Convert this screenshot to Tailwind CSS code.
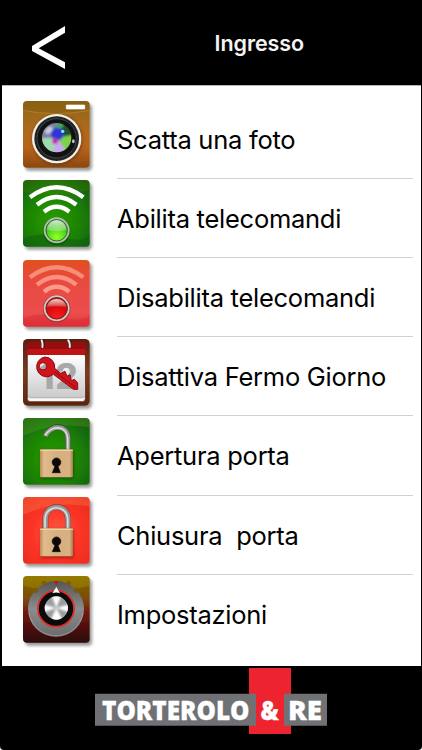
<!DOCTYPE html>
<html lang="it">
<head>
  <meta charset="UTF-8" />
  <meta name="viewport" content="width=device-width, initial-scale=1.0" />
  <title>Ingresso</title>
  <script src="https://cdn.jsdelivr.net/npm/@tailwindcss/browser@4"></script>
</head>
<body class="bg-white font-['Inter',sans-serif] text-black">
  <!-- Shared gradients -->
  <svg class="absolute w-0 h-0" aria-hidden="true">
    <defs>
      <filter id="shadow" x="-10%" y="-10%" width="130%" height="130%">
        <feDropShadow dx="7" dy="9" stdDeviation="4" flood-color="#000" flood-opacity=".4" />
      </filter>
      <filter id="soft" x="-20%" y="-20%" width="140%" height="140%"><feGaussianBlur stdDeviation="5" /></filter>
      <filter id="softer" x="-20%" y="-20%" width="140%" height="140%"><feGaussianBlur stdDeviation="3" /></filter>
      <linearGradient id="orange" x1="0" y1="0" x2="0" y2="1">
        <stop offset="0" stop-color="#8f6412" /><stop offset=".35" stop-color="#a8691f" /><stop offset=".7" stop-color="#b7641c" /><stop offset="1" stop-color="#8c480f" />
      </linearGradient>
      <radialGradient id="green" cx=".45" cy=".6" r=".75">
        <stop offset="0" stop-color="#279c04" /><stop offset=".5" stop-color="#1d8406" /><stop offset="1" stop-color="#145a0a" />
      </radialGradient>
      <linearGradient id="coral" x1="0" y1="0" x2="0" y2="1">
        <stop offset="0" stop-color="#e0501f" /><stop offset=".3" stop-color="#ea4a3e" /><stop offset=".8" stop-color="#ea4f4d" /><stop offset="1" stop-color="#df3038" />
      </linearGradient>
      <radialGradient id="red" cx=".5" cy=".55" r=".75">
        <stop offset="0" stop-color="#ff5a40" /><stop offset=".5" stop-color="#fb3427" /><stop offset="1" stop-color="#e62a1c" />
      </radialGradient>
      <linearGradient id="wood" x1="0" y1="0" x2="0" y2="1">
        <stop offset="0" stop-color="#5a1f10" /><stop offset=".5" stop-color="#7d3a1c" /><stop offset="1" stop-color="#5c260f" />
      </linearGradient>
      <linearGradient id="wine" x1="0" y1="0" x2="0" y2="1">
        <stop offset="0" stop-color="#876a00" /><stop offset=".35" stop-color="#7a4a08" /><stop offset=".55" stop-color="#701712" /><stop offset="1" stop-color="#2c0708" />
      </linearGradient>
      <linearGradient id="paper" x1="0" y1="0" x2="0" y2="1">
        <stop offset="0" stop-color="#fff" /><stop offset="1" stop-color="#c9c9c9" />
      </linearGradient>
      <linearGradient id="brass" x1="0" y1="0" x2="1" y2="0">
        <stop offset="0" stop-color="#b98958" /><stop offset=".12" stop-color="#e2bb8c" /><stop offset=".5" stop-color="#d6b080" /><stop offset=".9" stop-color="#d8b081" /><stop offset="1" stop-color="#a57a4b" />
      </linearGradient>
      <radialGradient id="ledGreen" cx=".5" cy=".8" r=".75">
        <stop offset="0" stop-color="#9aff2c" /><stop offset=".5" stop-color="#4fdc1c" /><stop offset="1" stop-color="#2e8f28" />
      </radialGradient>
      <radialGradient id="ledRed" cx=".5" cy=".85" r=".75">
        <stop offset="0" stop-color="#fa1e1e" /><stop offset=".6" stop-color="#d80b0b" /><stop offset="1" stop-color="#b41818" />
      </radialGradient>
      <linearGradient id="gloss" x1="0" y1="0" x2="0" y2="1">
        <stop offset="0" stop-color="#fff" stop-opacity=".8" /><stop offset="1" stop-color="#fff" stop-opacity=".2" />
      </linearGradient>
      <linearGradient id="ring" x1="0" y1="0" x2="0" y2="1">
        <stop offset="0" stop-color="#555" /><stop offset=".5" stop-color="#8c8c8c" /><stop offset="1" stop-color="#6a6a6a" />
      </linearGradient>
      <clipPath id="lens"><circle cx="101" cy="110" r="46" /></clipPath>
      <clipPath id="knob"><circle cx="100" cy="96" r="35" /></clipPath>
      <clipPath id="tile"><rect width="200" height="200" rx="12" /></clipPath>
    </defs>
  </svg>

  <div class="flex h-[750px] w-[422px] flex-col overflow-hidden rounded-b-[4px] bg-black">
    <header class="flex h-[85px] shrink-0 items-start">
      <svg class="mt-[26px] ml-[31px] h-[44px] w-[35px]" viewBox="93 78 105 132"><path d="M96 138 195 78V98L116 145 195 187V207L96 153Z" fill="#fff" /></svg>
      <h1 class="mt-[29px] ml-[148.5px] text-[21.5px] leading-7 font-semibold tracking-[-0.05px] text-[#f4f4f4]">Ingresso</h1>
    </header>

    <main class="mr-[1.5px] ml-[1.5px] h-[581px] shrink-0 overflow-hidden border-t border-[#b5b5b5] bg-white pt-[13.6px] pl-[21.5px]">
      <!-- Camera -->
      <div class="flex h-[79.2px] pt-[1.6px]">
        <svg class="size-[72px] shrink-0" viewBox="0 0 216 216">
          <rect width="200" height="200" rx="12" fill="url(#orange)" filter="url(#shadow)" />
          <path d="M0 12Q0 0 12 0H188Q200 0 200 12V28Q100 48 0 28Z" fill="#6c5a00" opacity=".2" />
          <path d="M0 28Q100 48 200 28" stroke="#d09a45" stroke-width="2" fill="none" opacity=".7" />
          <rect x="128" y="10" width="59" height="16" rx="4" fill="#fff" stroke="#8b5a10" stroke-width="2" />
          <circle cx="103" cy="116" r="75" fill="#4a2400" opacity=".5" filter="url(#soft)" />
          <circle cx="101" cy="113" r="74" fill="#f2f0ec" />
          <circle cx="101" cy="113" r="67" fill="#222" />
          <circle cx="101" cy="112" r="59" fill="#111" stroke="#3f4647" stroke-width="3" />
          <circle cx="101" cy="110" r="46" fill="#46618c" />
          <g clip-path="url(#lens)"><g filter="url(#softer)">
            <path d="M101 110 45 115 54 60 108 56Z" fill="#7d80a5" />
            <path d="M101 110 100 56 145 65Z" fill="#45a65d" />
            <path d="M101 110 130 56 165 120Z" fill="#1f5230" />
            <path d="M101 110 160 100 135 165Z" fill="#7fd048" />
            <path d="M101 110 136 160 75 170Z" fill="#c9a9ee" />
            <path d="M101 110 85 165 40 112Z" fill="#9edcae" />
            <circle cx="103" cy="99" r="19" fill="#2a38d4" />
            <circle cx="96" cy="120" r="9" fill="#c42bb1" />
          </g></g>
          <circle cx="119" cy="91" r="5" fill="#8fe7e8" />
          <ellipse cx="78" cy="88" rx="13" ry="9" fill="#fff" opacity=".6" transform="rotate(-40 78 88)" filter="url(#softer)" />
          <circle cx="101" cy="110" r="46" fill="none" stroke="#141414" stroke-width="4" />
          <ellipse cx="151" cy="121" rx="4" ry="6" fill="#c3c8c8" />
        </svg>
        <div class="ml-[22px] h-full w-[296px] border-b border-[#d2d2d4] pt-[22.4px] text-[25.5px] leading-8 tracking-[-0.26px]">Scatta una foto</div>
      </div>

      <!-- Remote controls on -->
      <div class="flex h-[79.2px] pt-[1.6px]">
        <svg class="size-[72px] shrink-0" viewBox="0 0 216 216">
          <rect width="200" height="200" rx="12" fill="url(#green)" filter="url(#shadow)" />
          <g clip-path="url(#tile)">
            <path d="M0 176Q50 153 120 172T200 160V200H0Z" fill="#0b5c12" opacity=".5" />
            <path d="M0 0H200V30Q100 55 0 35Z" fill="#5e8a00" opacity=".2" />
          </g>
          <g fill="none" stroke="#fff" stroke-width="13">
            <path d="M21 52Q101-8 181 52" /><path d="M42 74Q101 28 160 74" /><path d="M63 95Q101 66 139 95" />
          </g>
          <circle cx="101" cy="154" r="41" fill="#07440b" opacity=".6" />
          <circle cx="101" cy="151" r="36" fill="url(#ledGreen)" stroke="#b9bcb5" stroke-width="6" />
          <circle cx="101" cy="151" r="32" fill="none" stroke="#336a2c" stroke-width="3" />
          <path d="M72 149A29 29 0 0 1 130 149Q101 159 72 149" fill="url(#gloss)" />
        </svg>
        <div class="ml-[22px] h-full w-[296px] border-b border-[#d2d2d4] pt-[22.4px] text-[25.5px] leading-8 tracking-[-0.26px]">Abilita telecomandi</div>
      </div>

      <!-- Remote controls off -->
      <div class="flex h-[79.2px] pt-[1.6px]">
        <svg class="size-[72px] shrink-0" viewBox="0 0 216 216">
          <rect width="200" height="200" rx="12" fill="url(#coral)" filter="url(#shadow)" />
          <g clip-path="url(#tile)"><path d="M0 176Q50 153 120 172T200 160V200H0Z" fill="#d92a36" opacity=".45" /></g>
          <g fill="none" stroke="#ffb09e" stroke-width="13">
            <path d="M21 52Q101-8 181 52" opacity=".65" /><path d="M42 74Q101 28 160 74" opacity=".7" /><path d="M63 95Q101 66 139 95" opacity=".8" />
          </g>
          <circle cx="101" cy="146" r="41" fill="#8c2528" opacity=".75" />
          <circle cx="101" cy="145" r="36" fill="url(#ledRed)" stroke="#cfc8c4" stroke-width="6" />
          <circle cx="101" cy="145" r="32" fill="none" stroke="#7d2424" stroke-width="3" />
          <path d="M71 140A31 31 0 0 1 131 140Q101 137 71 140" fill="url(#gloss)" />
        </svg>
        <div class="ml-[22px] h-full w-[296px] border-b border-[#d2d2d4] pt-[22.4px] text-[25.5px] leading-8 tracking-[-0.26px]">Disabilita telecomandi</div>
      </div>

      <!-- Calendar with key -->
      <div class="flex h-[79.2px] pt-[1.6px]">
        <svg class="size-[72px] shrink-0" viewBox="0 0 216 216">
          <rect width="200" height="200" rx="14" fill="url(#wood)" filter="url(#shadow)" />
          <rect x="13" y="44" width="174" height="144" rx="9" fill="#f7f7f7" stroke="#3d170a" stroke-width="2" />
          <rect x="15" y="48" width="170" height="130" rx="6" fill="url(#paper)" />
          <path d="M15 170Q16 176 24 176H177Q184 176 185 170" stroke="#aaa" stroke-width="2" fill="none" />
          <path d="M13 48V20Q13 10 23 10H177Q187 10 187 20V48Z" fill="#c01414" />
          <path d="M13 30V20Q13 10 23 10H177Q187 10 187 20V30Z" fill="#940d10" />
          <text x="48" y="151" class="font-['Inter',sans-serif] text-[106px] font-extrabold" textLength="116" fill="#a7a8aa">12</text>
          <g fill="none" stroke="#3a1717" stroke-width="10"><path d="M60 4V25M140 4V25" /></g>
          <g fill="none" stroke="#eee" stroke-width="6" stroke-linecap="round"><path d="M56 4Q60 12 58 24M136 4Q142 12 140 24" /></g>
          <path fill-rule="evenodd" d="M65 54A30 30 0 1 0 80 112L91 106 151 151 164 151 164 132 154 121 145 125 141 107 132 112 126 97 113 103 95 88A30 30 0 0 0 65 54M60 71A11 11 0 1 1 59.900 93 11 11 0 0 1 60 71Z" fill="#cf151b" stroke="#8c0b12" stroke-width="3" stroke-linejoin="round" />
          <path d="M96 99 157 145" stroke="#8c0b12" stroke-width="3" />
        </svg>
        <div class="ml-[22px] h-full w-[296px] border-b border-[#d2d2d4] pt-[22.4px] text-[25.5px] leading-8 tracking-[-0.26px]">Disattiva Fermo Giorno</div>
      </div>

      <!-- Open padlock -->
      <div class="flex h-[79.2px] pt-[1.6px]">
        <svg class="size-[72px] shrink-0" viewBox="0 0 216 216">
          <rect width="200" height="200" rx="12" fill="url(#green)" filter="url(#shadow)" />
          <path d="M0 54V12Q0 0 12 0H188Q200 0 200 12V28Q90 10 0 54" fill="#80bc30" opacity=".22" />
          <path d="M135 98V62C135 16 82 17 67 54" fill="none" stroke="#285018" stroke-width="17" />
          <path d="M135 98V62C135 18 82 19 67 54" fill="none" stroke="#969696" stroke-width="14" />
          <path d="M134 98V62C132 20 84 21 66 53" fill="none" stroke="#ddd" stroke-width="5" />
          <rect x="54" y="97" width="98" height="86" rx="3" fill="#073b0a" opacity=".6" filter="url(#soft)" />
          <rect x="51" y="94" width="99" height="84" rx="3" fill="url(#brass)" />
          <path d="M51 97H150" stroke="#f0d5ac" stroke-width="3" />
          <path d="M96 145A13 13 0 1 1 105 145L112 164H88Z" fill="#0b0805" stroke="#0b0805" stroke-width="2" />
        </svg>
        <div class="ml-[22px] h-full w-[296px] border-b border-[#d2d2d4] pt-[22.4px] text-[25.5px] leading-8 tracking-[-0.26px]">Apertura porta</div>
      </div>

      <!-- Closed padlock -->
      <div class="flex h-[79.2px] pt-[1.6px]">
        <svg class="size-[72px] shrink-0" viewBox="0 0 216 216">
          <rect width="200" height="200" rx="12" fill="url(#red)" filter="url(#shadow)" />
          <path d="M0 54V12Q0 0 12 0H188Q200 0 200 12V28Q90 10 0 54" fill="#ffa060" opacity=".25" />
          <path d="M67 98V66C67 18 135 18 135 66V98" fill="none" stroke="#8d3a30" stroke-width="18" />
          <path d="M67 98V66C67 19 135 19 135 66V98" fill="none" stroke="#969696" stroke-width="15" />
          <path d="M66 98V66C68 21 132 21 134 66V98" fill="none" stroke="#ddd" stroke-width="5" />
          <rect x="54" y="97" width="98" height="86" rx="3" fill="#7a0f08" opacity=".6" filter="url(#soft)" />
          <rect x="51" y="94" width="99" height="84" rx="3" fill="url(#brass)" />
          <path d="M51 97H150" stroke="#f0d5ac" stroke-width="3" />
          <path d="M96 145A13 13 0 1 1 105 145L112 164H88Z" fill="#0b0805" stroke="#0b0805" stroke-width="2" />
        </svg>
        <div class="ml-[22px] h-full w-[296px] border-b border-[#d2d2d4] pt-[22.4px] text-[25.5px] leading-8 tracking-[-0.26px] whitespace-pre">Chiusura  porta</div>
      </div>

      <!-- Settings knob -->
      <div class="flex h-[79.2px] pt-[1.6px]">
        <svg class="size-[72px] shrink-0" viewBox="0 0 216 216">
          <rect width="200" height="200" rx="12" fill="url(#wine)" filter="url(#shadow)" />
          <path d="M0 12Q0 0 12 0H188Q200 0 200 12V28Q140 48 100 48T0 28Z" fill="#b4a200" opacity=".3" />
          <circle cx="99" cy="99" r="84" fill="url(#ring)" />
          <path d="M18 110A82 82 0 0 0 180 110" fill="none" stroke="#aaa" stroke-width="3" opacity=".6" />
          <g fill="#7d5b08">
            <circle cx="38" cy="43" r="8" /><circle cx="160" cy="43" r="8" /><circle cx="63" cy="21" r="7" /><circle cx="137" cy="21" r="7" />
          </g>
          <path d="M93 15H107L100 28Z" fill="#c51414" />
          <circle cx="99" cy="98" r="54" fill="#0b0b0b" stroke="#e12a2d" stroke-width="5" />
          <path d="M88 52Q100 47 111 52L100 33Z" fill="#fff" />
          <g clip-path="url(#knob)">
            <circle cx="100" cy="96" r="35" fill="#9d9d9d" />
            <g fill="#fff" filter="url(#softer)">
              <path d="M100 96 84 55H116ZM100 96 80 138H122Z" /><path d="M100 96 58 84V110ZM100 96 142 84V110Z" />
            </g>
          </g>
        </svg>
        <div class="ml-[22px] h-full w-[296px] pt-[22.4px] text-[25.5px] leading-8 tracking-[-0.26px]">Impostazioni</div>
      </div>
    </main>

    <footer class="flex flex-1 justify-center">
      <svg class="h-[84px] w-[422px]" viewBox="0 666 422 84">
        <path d="M95 693.700H256V725.700H95Z" fill="#707174" />
        <path d="M249 668H291V734H249Z" fill="#ed2430" />
        <path d="M249 693.700H256V725.700H249ZM284 693.700H327V725.700H284Z" fill="#707174" />
        <g class="font-['Open_Sans',sans-serif] text-[27px] font-extrabold" fill="#fff" stroke="#fff" stroke-width=".3">
          <text transform="translate(102 720) scale(.87 1)" textLength="169.500" lengthAdjust="spacingAndGlyphs">TORTEROLO</text>
          <text transform="translate(260.500 720) scale(.87 1)" textLength="21" lengthAdjust="spacingAndGlyphs">&amp;</text>
          <text transform="translate(288 720) scale(.87 1)" textLength="39" lengthAdjust="spacingAndGlyphs">RE</text>
        </g>
      </svg>
    </footer>
  </div>
</body>
</html>
